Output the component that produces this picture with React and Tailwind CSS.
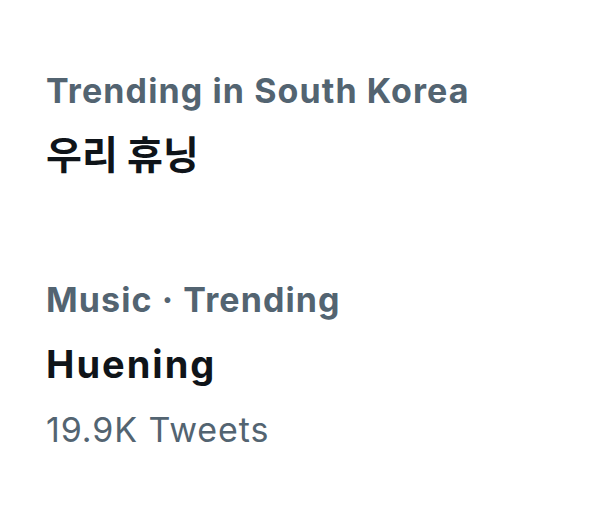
export default function App() {
  return (
    <div
      className="w-[605px] h-[510px] bg-white overflow-hidden"
      style={{ fontFamily: "Inter, 'Noto Sans CJK KR', sans-serif" }}
    >
      <div className="flex flex-col pl-[46px] pt-[58px]">
        <div className="flex flex-col">
          <span className="text-[34px] leading-[66px] font-bold tracking-[1.1px] text-[#536471]">Trending in South Korea</span>
          <span className="text-[39px] leading-[62px] font-bold text-[#0f1419]">우리 휴닝</span>
        </div>
        <div className="flex flex-col mt-[81px]">
          <span className="text-[34px] leading-[66px] font-bold tracking-[1.1px] text-[#536471]">Music · Trending</span>
          <span className="text-[38px] leading-[62px] font-bold tracking-[2px] text-[#0f1419]">Huening</span>
          <span className="text-[34px] leading-[70px] tracking-[0.9px] text-[#536471]">19.9K Tweets</span>
        </div>
      </div>
    </div>
  );
}
